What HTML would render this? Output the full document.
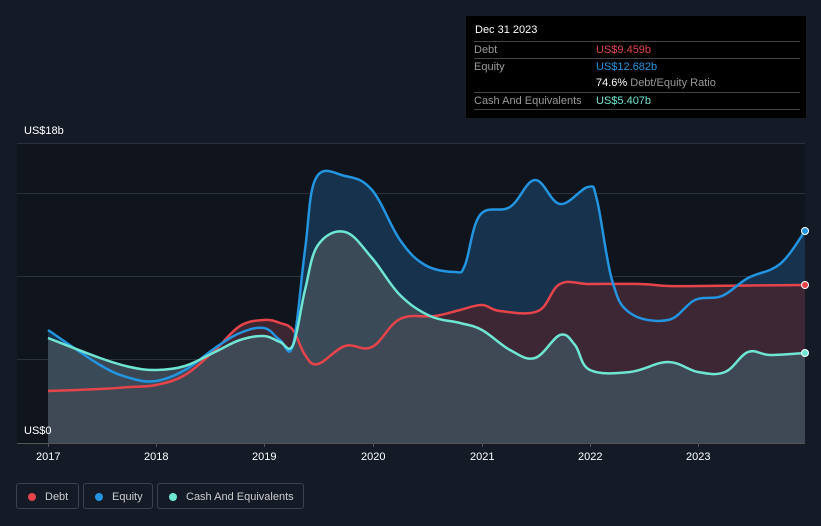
<!DOCTYPE html>
<html><head><meta charset="utf-8"><style>
body{margin:0;width:821px;height:526px;background:#151b26;font-family:"Liberation Sans",sans-serif;overflow:hidden;position:relative}
.t{position:absolute;color:#fff;font-size:11px}
.tip{position:absolute;left:466px;top:16px;width:340px;height:102px;background:#000;font-size:11px;color:#fff}
.row{position:absolute;left:8px;right:6px;height:17px;border-top:1px solid #444;line-height:17px;color:#999}
.row span{position:absolute;left:122px}
.leg{position:absolute;top:483px;height:26px;border:1px solid #3a424d;border-radius:3px;color:#ccc;font-size:11px;line-height:26px;box-sizing:border-box}
.leg i{position:absolute;left:11px;top:9px;width:8px;height:8px;border-radius:50%}
</style></head><body>
<svg width="821" height="526" style="position:absolute;left:0;top:0">
<rect x="17" y="143" width="788" height="300" fill="#0f141d"/>
<g stroke="#2a313b" stroke-width="1"><line x1="17" y1="143.5" x2="805" y2="143.5"/><line x1="17" y1="193.5" x2="805" y2="193.5"/><line x1="17" y1="276.5" x2="805" y2="276.5"/><line x1="17" y1="359.5" x2="805" y2="359.5"/><line x1="17" y1="443.5" x2="805" y2="443.5" stroke="#555"/></g>
<path id="fe" fill="#17344f" fill-opacity="0.95"/>
<path id="fd" fill="#3f2733" fill-opacity="0.95"/>
<path id="fc" fill="#3f4d59" fill-opacity="0.9"/>
<g fill="none" stroke-width="2.5" stroke-linejoin="round">
<path id="ld" stroke="#e5444a"/>
<path id="le" stroke="#2394e0"/>
<path id="lc" stroke="#6ee6d3"/>
</g>
<circle cx="805" cy="231" r="3.5" fill="#2394e0" stroke="#fff"/>
<circle cx="805" cy="285" r="3.5" fill="#e5444a" stroke="#fff"/>
<circle cx="805" cy="353" r="3.5" fill="#6ee6d3" stroke="#fff"/>
<g stroke="#555"><line x1="48.5" y1="443" x2="48.5" y2="447"/><line x1="156.5" y1="443" x2="156.5" y2="447"/><line x1="264.5" y1="443" x2="264.5" y2="447"/><line x1="373.5" y1="443" x2="373.5" y2="447"/><line x1="482.5" y1="443" x2="482.5" y2="447"/><line x1="590.5" y1="443" x2="590.5" y2="447"/><line x1="698.5" y1="443" x2="698.5" y2="447"/></g>
</svg>
<script>
function sm(p){var d="M"+p[0]+","+p[1];for(var i=0;i<p.length-2;i+=2){var x0=p[i-2]!==undefined?p[i-2]:p[i],y0=p[i-1]!==undefined?p[i-1]:p[i+1],x1=p[i],y1=p[i+1],x2=p[i+2],y2=p[i+3],x3=p[i+4]!==undefined?p[i+4]:x2,y3=p[i+5]!==undefined?p[i+5]:y2;var t=0.18;d+=" C"+(x1+(x2-x0)*t)+","+(y1+(y2-y0)*t)+" "+(x2-(x3-x1)*t)+","+(y2-(y3-y1)*t)+" "+x2+","+y2;}return d;}
var D=[48,391,100,389,130,387,156,385,185,375,215,350,240,326,264,320,280,323,293,330,305,355,318,364,345,346,372,347,400,319,435,316,460,310,482,305,500,311,538,311,560,284,590,284,640,284,668,286,698,286,805,285];
var E=[48,330,100,365,130,378,156,381,185,370,215,348,240,333,264,328,280,340,293,345,305,250,316,178,345,176,372,190,400,240,425,265,455,272,465,265,480,215,510,207,535,180,560,204,588,187,597,200,612,280,630,313,668,320,695,300,722,296,748,278,780,264,805,231];
var C=[48,338,100,358,130,367,156,370,185,366,215,352,240,340,264,336,280,342,293,345,305,290,318,245,345,232,372,258,400,295,430,316,460,323,482,330,510,350,535,358,560,335,575,345,590,370,630,372,668,362,698,372,725,372,748,352,770,355,805,353];
[["d",D],["e",E],["c",C]].forEach(function(a){var s=sm(a[1]);document.getElementById("l"+a[0]).setAttribute("d",s);document.getElementById("f"+a[0]).setAttribute("d",s+" L805,443 L48,443 Z");});
</script>
<div class="t" style="left:24px;top:125px">US$18b</div>
<div class="t" style="left:24px;top:425px">US$0</div>
<div class="t" style="left:36px;top:451px">2017</div>
<div class="t" style="left:144px;top:451px">2018</div>
<div class="t" style="left:252px;top:451px">2019</div>
<div class="t" style="left:361px;top:451px">2020</div>
<div class="t" style="left:470px;top:451px">2021</div>
<div class="t" style="left:578px;top:451px">2022</div>
<div class="t" style="left:686px;top:451px">2023</div>
<div class="tip">
<div style="position:absolute;left:9px;top:8px">Dec 31 2023</div>
<div class="row" style="top:25px">Debt<span style="color:#e5444a">US$9.459b</span></div>
<div class="row" style="top:42px">Equity<span style="color:#2394e0">US$12.682b</span></div>
<div class="row" style="top:59px;border-top:none"><span style="color:#fff">74.6% <b style="font-weight:normal;color:#999">Debt/Equity Ratio</b></span></div>
<div class="row" style="top:76px">Cash And Equivalents<span style="color:#6ee6d3">US$5.407b</span></div>
<div class="row" style="top:93px;height:0"></div>
</div>
<div class="leg" style="left:16px;width:63px"><i style="background:#e5444a"></i><span style="position:absolute;left:28px">Debt</span></div>
<div class="leg" style="left:83px;width:70px"><i style="background:#2394e0"></i><span style="position:absolute;left:28px">Equity</span></div>
<div class="leg" style="left:157px;width:147px"><i style="background:#6ee6d3"></i><span style="position:absolute;left:28px">Cash And Equivalents</span></div>
</body></html>
